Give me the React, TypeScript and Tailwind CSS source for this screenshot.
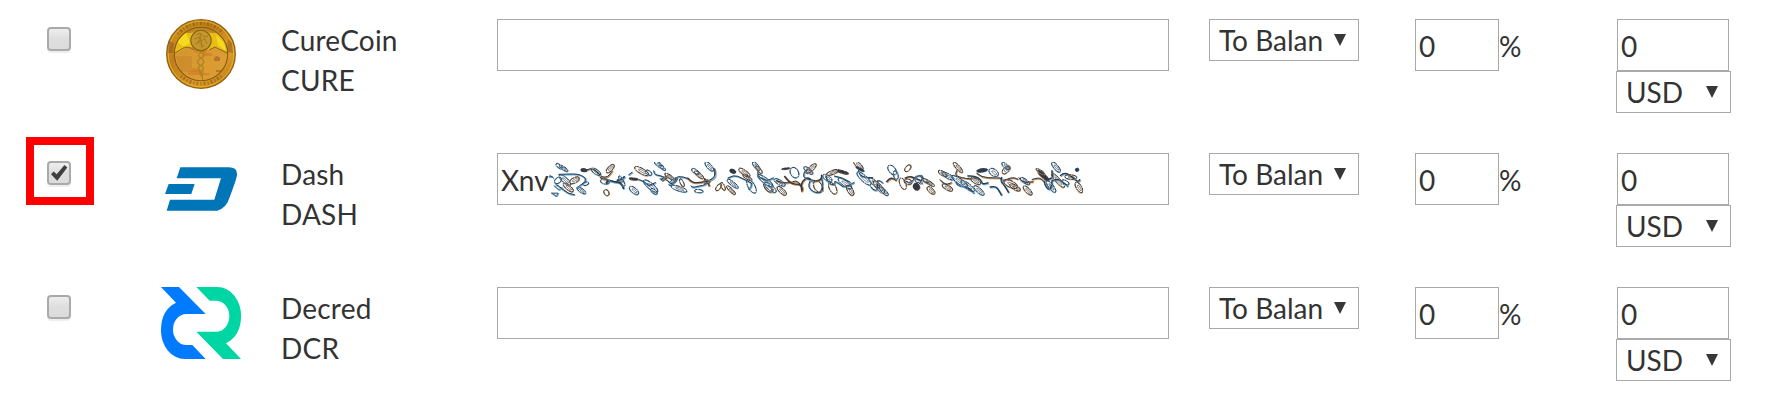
import React from "react";

function Checkbox({ checked }: { checked?: boolean }) {
  return (
    <span className="relative mt-[8px] ml-[47px] block h-[24px] w-[24px] rounded-[4px] border-2 border-[#aaaaaa] bg-linear-to-b from-[#eeeeee] via-[#dedede] to-[#dcdcdc] shadow-[0_2px_0_#eeeeee]">
      {checked && (
        <>
          <svg viewBox="0 0 20 20" className="block h-[20px] w-[20px]" aria-hidden="true">
            <path d="M2 11.2 4.6 8.6 7.7 11.3 15.5 2 18.3 4.5 8.2 17.8Z" fill="#3f3f3f" />
          </svg>
          <span className="absolute -top-[26px] -left-[23px] h-[68px] w-[68px] border-8 border-[#ff0000]" />
        </>
      )}
    </span>
  );
}

function CureLogo() {
  return (
    <svg viewBox="0 0 70 70" className="ml-[5px] block h-[70px] w-[70px]" aria-hidden="true">
      <defs>
        <linearGradient id="rim" x1="0" y1="0" x2="1" y2="1">
          <stop offset="0" stopColor="#d29a1c" />
          <stop offset=".35" stopColor="#c07d1c" />
          <stop offset=".7" stopColor="#dd9c2a" />
          <stop offset="1" stopColor="#b46b14" />
        </linearGradient>
        <linearGradient id="ground" x1="0" y1="0" x2="1" y2="1">
          <stop offset="0" stopColor="#cf922b" />
          <stop offset="1" stopColor="#e0a037" />
        </linearGradient>
        <clipPath id="face">
          <circle cx="35" cy="35" r="26.5" />
        </clipPath>
      </defs>
      <circle cx="35" cy="35" r="34.3" fill="url(#rim)" stroke="#94600f" strokeWidth="1.3" />
      <circle cx="35" cy="35" r="32.8" fill="none" stroke="#e2b127" strokeWidth="1" />
      <path d="M3 22 8 24 7 34 2 34ZM62 20 66 24 67 34 61 33Z" fill="#925c25" opacity=".6" />
      <path d="M12 15A30 30 0 0 1 57 14" fill="none" stroke="#77530b" strokeWidth="3.4" strokeDasharray="1.2 2.1 2.2 1.7" opacity=".5" />
      <path d="M15 57A30 30 0 0 0 55 57" fill="none" stroke="#795009" strokeWidth="3.4" strokeDasharray="1.2 1.8 2 2.1" opacity=".5" />
      <g clipPath="url(#face)">
        <path d="M0 0H70V70H0Z" fill="url(#ground)" />
        <path d="M0 14H70V36L58 32 49 28 43 31 26 28 19 29 8 35Z" fill="#e8bd16" />
        <path d="M10 22 20 14 24 24 18 28ZM50 16 58 24 60 32 52 26Z" fill="#f5da20" />
        <path d="M18 0H52V14H46Q35 7 24 14H14Z" fill="#b98525" />
        <path d="M9 34 19 28 25 29 28 31M43 31 49 28 61 34" fill="none" stroke="#906220" strokeWidth="1" />
        <path d="M28 31H41V34H46V37H36V34H28ZM26 51H38V54H44V56H22V53Z" fill="#d07226" opacity=".5" />
        <path d="M10 37H26V49H34V53H15Z" fill="#c27c29" opacity=".4" />
        <path d="M48 39Q51 35 54 39V42H48ZM50 51H57V53H50Z" fill="#b8742b" />
        <path d="M31 31C40 35 40 37 35 39C29 42 32 46 36 47C41 50 32 52 34 55C37 58 38 60 34 64M38 32C32 35 31 37 35 39C40 42 37 46 34 47C29 51 37 53 37 57" fill="none" stroke="#a9831c" strokeWidth="1.1" />
      </g>
      <circle cx="35" cy="21.5" r="10.2" fill="#c6972c" stroke="#82630e" strokeWidth="1.1" />
      <path d="M30 16 34 14 38 18 42 17M28 20 34 18 32 23 39 20 41 25M34 15 36 29M29 25 34 23 38 28" fill="none" stroke="#a27d20" strokeWidth="1" />
      <circle cx="35" cy="35" r="26.7" fill="none" stroke="#875b12" strokeWidth="1.1" />
    </svg>
  );
}

function DashLogo() {
  return (
    <svg viewBox="75 81 217 132" className="mt-[14px] ml-[4px] block h-[44px] w-[72.3px]" aria-hidden="true">
      <path
        d="M121 82H267Q293 82 291 106Q289 120 269 172Q260 204 232 212H80L90 179H223L243 115H110ZM86 132H164L154 162H75Z"
        fill="#0075b8"
      />
    </svg>
  );
}

function DecredLogo() {
  return (
    <svg viewBox="63 51 240 216" className="block h-[72px] w-[80px]" aria-hidden="true">
      <path
        d="M63 51H117L197 132H139A40 46.5 0 0 0 139 225H157L197 267H134A71 85 0 0 1 63 180Q63 120 108 98Z"
        fill="#007bff"
      />
      <path
        d="M169 51H232A71 85 0 0 1 303 139Q303 197 258 220L303 267H249L169 185H228A40 46.5 0 0 0 228 92H209Z"
        fill="#00d6a3"
      />
    </svg>
  );
}

const INK = "#303846";
const BROWN = "#c79058";
const BLUE = "#6db4e0";

// [cx, cy, rx, ry, rotation, tint, solid]
type Loop = [number, number, number, number, number, string, boolean?];

const loops: Loop[] = [
  [42, 30, 11, 5, 40, BLUE], [56, 37, 15, 5, 35, BLUE], [39, 73, 8, 12, 50, BLUE],
  [60, 72, 22, 8, 42, BLUE], [88, 73, 16, 8, -28, BROWN], [70, 94, 19, 7, 40, BROWN],
  [116, 42, 9, 4, 5, INK, true], [153, 47, 17, 7, 35, BLUE], [195, 38, 16, 7, -48, BROWN],
  [109, 103, 16, 6, 35, BLUE], [122, 83, 9, 5, -20, BLUE], [180, 76, 14, 8, 10, BLUE],
  [184, 110, 7, 10, -30, BROWN], [230, 75, 5, 17, -28, BLUE], [266, 69, 13, 3, 5, BROWN, true],
  [290, 45, 24, 8, 30, BROWN], [311, 50, 11, 6, 35, BLUE], [267, 103, 17, 8, 40, BLUE],
  [317, 90, 27, 9, 40, BLUE], [327, 106, 12, 6, 40, BLUE],
  [342, 26, 17, 6, 38, BLUE], [352, 35, 12, 4, 38, BLUE], [373, 61, 16, 5, 32, BROWN],
  [358, 68, 10, 4, -40, BROWN], [384, 77, 16, 6, -42, BLUE], [402, 98, 25, 7, 18, BLUE],
  [411, 80, 13, 5, 65, BROWN], [451, 46, 13, 6, 35, BLUE],
  [462, 56, 17, 6, 40, BROWN], [493, 31, 18, 7, 48, BLUE], [461, 105, 13, 5, 5, BLUE],
  [485, 77, 10, 6, 0, BROWN], [520, 94, 12, 6, -55, BROWN], [534, 91, 13, 5, 65, BROWN],
  [563, 45, 9, 5, 20, INK, true], [563, 83, 21, 6, 38, BLUE], [558, 102, 18, 5, 45, BROWN],
  [598, 49, 20, 7, 35, BROWN], [607, 64, 16, 5, 32, BROWN], [619, 91, 10, 23, -30, BLUE],
  [634, 30, 16, 6, 48, BLUE], [642, 41, 14, 5, 48, BROWN], [661, 74, 29, 8, 38, BLUE],
  [676, 94, 22, 8, 40, BLUE], [710, 104, 18, 7, 43, BROWN], [704, 79, 19, 7, 30, BLUE],
  [722, 38, 12, 2, -8, BROWN, true], [748, 50, 12, 17, -28, BLUE],
  [790, 43, 17, 6, 39, BLUE], [798, 38, 20, 7, -44, BROWN], [819, 92, 12, 19, -30, BROWN],
  [847, 66, 16, 8, 35, BLUE], [863, 49, 20, 6, -20, BROWN], [863, 97, 10, 19, -28, BROWN],
  [893, 48, 18, 4, 15, BROWN, true], [900, 82, 25, 8, 37, BLUE], [916, 103, 17, 8, 60, BROWN],
  [940, 27, 19, 7, 44, BROWN], [945, 39, 14, 3, 28, BLUE, true], [957, 67, 28, 9, 43, BLUE],
  [988, 80, 21, 7, 40, BLUE], [1002, 93, 24, 8, 48, BROWN], [1017, 106, 17, 6, 44, BLUE],
  [1041, 42, 10, 17, -38, BLUE], [1052, 57, 7, 13, -15, BLUE], [1073, 83, 9, 18, -22, BROWN],
  [1088, 37, 12, 7, -50, BROWN], [1089, 77, 12, 8, 15, BROWN], [1114, 92, 9, 11, -28, BROWN, true],
  [1122, 69, 13, 9, -35, BLUE], [1151, 79, 20, 5, 32, BROWN], [1158, 103, 15, 7, 42, BROWN],
  [1193, 52, 15, 6, 32, BROWN], [1209, 60, 20, 7, 30, BLUE], [1207, 94, 18, 7, 30, BROWN],
  [1239, 34, 20, 6, 48, BROWN], [1244, 76, 29, 8, 35, BLUE], [1268, 90, 25, 8, 38, BLUE],
  [1302, 103, 20, 7, 42, BLUE], [1292, 75, 17, 7, 30, BROWN], [1311, 43, 16, 5, -8, BLUE, true],
  [1346, 49, 16, 10, 35, BLUE], [1383, 42, 15, 8, -44, BROWN], [1382, 30, 15, 6, 43, BLUE],
  [1397, 84, 22, 10, 25, BROWN], [1410, 94, 18, 7, 30, BROWN], [1440, 75, 17, 6, 35, BLUE],
  [1448, 103, 18, 7, 46, BROWN], [1495, 59, 22, 6, 42, BROWN, true], [1486, 46, 15, 4, 32, BROWN],
  [1533, 33, 19, 7, 50, BLUE], [1539, 73, 28, 7, 48, BROWN], [1518, 91, 22, 7, 52, BLUE],
  [1561, 79, 12, 6, 28, BLUE], [1577, 63, 18, 7, 5, BROWN], [1602, 94, 18, 8, 58, BROWN],
  [1596, 41, 5, 5, 0, BLUE, true],
];

const strands: { d: string; tint: string; w: number }[] = [
  { d: "M13 57 26 66M10 62H23M19 111H39L34 121 21 112ZM26 88 41 101 53 94", tint: BLUE, w: 2 },
  { d: "M40 55Q65 54 86 54T121 67Q122 78 114 82T96 97M31 84Q43 91 57 103T89 116", tint: BLUE, w: 3 },
  { d: "M124 42Q137 36 144 39T170 62Q181 65 188 61T202 43M164 61Q166 68 177 70T202 76 235 74", tint: BROWN, w: 3 },
  { d: "M183 83Q188 71 197 74T221 79Q232 84 236 99M215 73Q231 72 239 61", tint: BLUE, w: 5 },
  { d: "M250 57 262 48M252 66Q270 66 286 72T306 85 332 79M326 43Q327 56 336 57T365 67", tint: BLUE, w: 3 },
  { d: "M344 69Q360 66 367 73T376 83Q389 83 390 73T400 62Q416 61 428 68", tint: BLUE, w: 3 },
  { d: "M427 65Q436 77 446 79T479 77Q510 71 510 57T507 37M477 67 488 78 493 91", tint: BROWN, w: 4 },
  { d: "M437 89Q441 95 449 93T473 88Q483 87 488 76M509 43Q516 62 491 75", tint: BLUE, w: 3 },
  { d: "M548 66Q566 56 578 61T619 81Q621 91 611 101M638 45Q637 61 646 65T661 72 686 65", tint: BLUE, w: 3 },
  { d: "M655 83Q659 102 671 107T680 97M692 73Q710 82 727 80T752 75Q770 83 773 98", tint: BROWN, w: 3 },
  { d: "M718 60Q732 79 741 82T762 85Q776 97 770 105 765 80 779 70T799 75Q822 76 827 69T829 56", tint: BROWN, w: 4 },
  { d: "M781 43Q772 60 779 65T810 74M829 62Q835 83 832 106M795 75Q784 96 806 107T832 91", tint: BLUE, w: 3 },
  { d: "M842 58Q846 82 859 85T869 79 894 92Q911 90 928 79M867 60Q889 62 916 79", tint: BLUE, w: 3 },
  { d: "M940 42Q941 57 952 61T984 65M976 91Q984 103 992 103T997 74Q1008 72 1013 82", tint: BLUE, w: 3 },
  { d: "M1024 78Q1034 65 1042 67T1054 74M1079 67Q1091 60 1100 63T1119 70Q1130 73 1130 84", tint: BROWN, w: 4 },
  { d: "M1080 74Q1092 82 1098 78T1108 66 1125 60 1123 84M1134 75Q1143 82 1151 78", tint: BLUE, w: 3 },
  { d: "M1184 70Q1198 86 1208 84T1220 78M1238 39Q1229 53 1234 58T1262 67 1284 61", tint: BROWN, w: 3 },
  { d: "M1230 75Q1237 90 1255 92T1287 112M1267 60Q1288 59 1298 65T1310 79 1330 80", tint: BLUE, w: 4 },
  { d: "M1294 51Q1310 65 1330 65T1365 66Q1373 75 1380 72T1397 66 1419 70", tint: BROWN, w: 3 },
  { d: "M1334 93Q1352 90 1357 97T1370 118M1370 63Q1366 75 1372 81T1391 110", tint: BLUE, w: 4 },
  { d: "M1421 64Q1428 77 1438 78T1465 77M1460 71Q1480 63 1488 69T1505 84", tint: BROWN, w: 3 },
  { d: "M1499 72Q1527 68 1523 57T1522 43M1545 59Q1557 50 1565 53T1588 69 1604 69", tint: BLUE, w: 4 },
  { d: "M1497 76Q1503 97 1511 99T1521 74Q1539 67 1546 73T1569 91", tint: BLUE, w: 4 },
];

function Redaction() {
  return (
    <svg viewBox="12 18 1602 105" className="block h-[35px] w-[534px]" aria-hidden="true">
      {strands.map(({ d, tint, w }, i) => (
        <g key={i} fill="none" strokeLinejoin="round">
          <path d={d} stroke={tint} strokeWidth={w + 2} transform="translate(2 2)" />
          <path d={d} stroke={INK} strokeWidth={w} />
        </g>
      ))}
      {loops.map(([cx, cy, rx, ry, a, tint, solid], i) => (
        <g key={i} transform={`rotate(${a} ${cx} ${cy})`} fill="none">
          <ellipse cx={cx + 1} cy={cy + 1} rx={rx} ry={ry} stroke={tint} strokeWidth={3} />
          <ellipse
            cx={cx}
            cy={cy}
            rx={rx}
            ry={ry}
            fill={solid ? INK : "none"}
            stroke={INK}
            strokeWidth={2.6}
            strokeDasharray={i % 2 ? "13 2 5 3" : "18 3"}
          />
          {!solid && rx > 14 && <ellipse cx={cx + 2} cy={cy} rx={rx * 0.55} ry={ry * 0.35} stroke={INK} strokeWidth={1.6} />}
        </g>
      ))}
    </svg>
  );
}

function Select({ label, className }: { label: string; className: string }) {
  return (
    <div className={`flex h-[42px] justify-between border border-[#a9a9a9] bg-white pl-[9px] ${className}`}>
      <span className="overflow-hidden whitespace-nowrap">{label}</span>
      <svg viewBox="0 0 12 12" className="mt-[14px] mr-[12px] h-[12px] w-[12px]" aria-hidden="true">
        <path d="M0 0H12L6 12Z" fill="#373737" />
      </svg>
    </div>
  );
}

function Field({ value, className, children }: { value?: string; className: string; children?: React.ReactNode }) {
  return (
    <div className={`flex h-[52px] items-center border border-[#a9a9a9] bg-white pl-[3px] ${className}`}>
      <span className="pt-px">{value}</span>
      {children}
    </div>
  );
}

const coins = [
  { name: "CureCoin", code: "CURE", Logo: CureLogo },
  { name: "Dash", code: "DASH", Logo: DashLogo, checked: true, address: "Xnv" },
  { name: "Decred", code: "DCR", Logo: DecredLogo },
];

export default function App() {
  return (
    <main className="h-[401px] w-[1766px] overflow-hidden bg-white pt-[19px] font-['Lato',sans-serif] text-[28px] leading-[40px] text-[#333333]">
      {coins.map(({ name, code, Logo, checked, address }) => (
        <div key={code} className="grid h-[134px] grid-cols-[161px_120px_216px_712px_206px_201px_150px] items-start">
          <Checkbox checked={checked} />
          <Logo />
          <div className="pt-px tracking-[0.2px]">
            <div>{name}</div>
            <div>{code}</div>
          </div>
          <Field value={address} className="w-[672px]">
            {address && <Redaction />}
          </Field>
          <Select label="To Balan" className="w-[150px]" />
          <div className="flex items-center">
            <Field value="0" className="w-[84px]" />
            <span className="pt-px">%</span>
          </div>
          <div>
            <Field value="0" className="ml-px w-[112px]" />
            <Select label="USD" className="w-[115px]" />
          </div>
        </div>
      ))}
    </main>
  );
}
